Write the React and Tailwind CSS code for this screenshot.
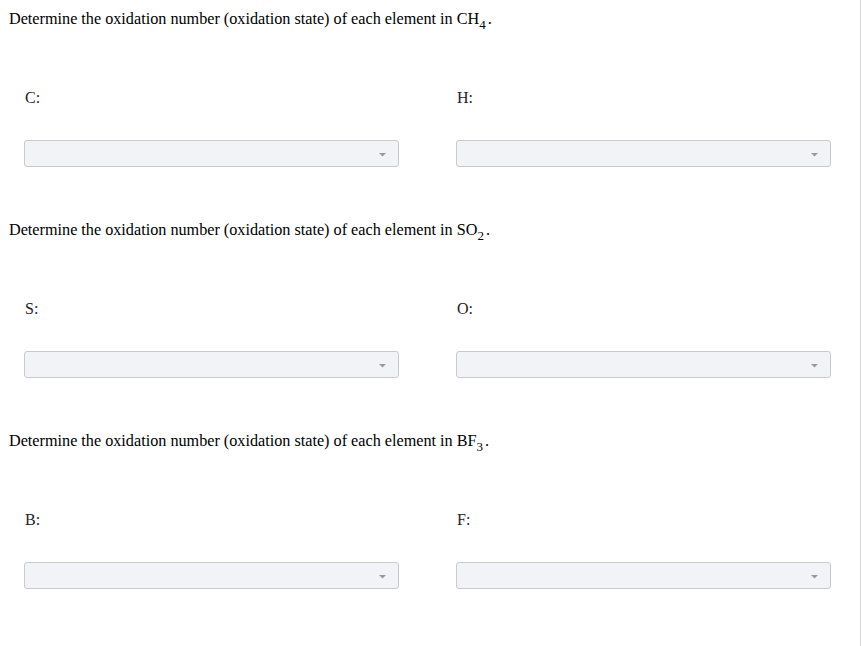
import React from "react";

const questions = [
  { formula: "CH", sub: "4", elements: ["C", "H"] },
  { formula: "SO", sub: "2", elements: ["S", "O"] },
  { formula: "BF", sub: "3", elements: ["B", "F"] },
];

const Dropdown = () => (
  <div className="h-[27px] w-full rounded-[3px] border border-[#c9cacd] bg-[#f2f3f6] flex items-center justify-end pr-[12px] pt-[3px]">
    <svg width="7" height="4" viewBox="0 0 7 4">
      <path d="M0 0 L7 0 L3.5 3.5 Z" fill="#999" />
    </svg>
  </div>
);

const Question = ({ q }) => (
  <div className="h-[211px]">
    <p className="pt-[10px] pl-[9px] text-[16.2px] leading-[19px] text-black">
      Determine the oxidation number (oxidation state) of each element in {q.formula}
      <span className="relative top-[5px] text-[13px] mr-[2px]">{q.sub}</span>.
    </p>
    <div className="mt-[59px] pl-[24px] grid grid-cols-[375px_375px] gap-x-[57px]">
      {q.elements.map((el) => (
        <div key={el}>
          <div className="pl-[1px] text-[16px] leading-[19px] text-[#222]">{el}:</div>
          <div className="mt-[33px]">
            <Dropdown />
          </div>
        </div>
      ))}
    </div>
  </div>
);

const App = () => {
  return (
    <div
      className="w-[861px] h-[646px] bg-white border-r border-[#d8d8d8]"
      style={{ fontFamily: '"Liberation Serif", serif' }}
    >
      {questions.map((q) => (
        <Question key={q.formula} q={q} />
      ))}
    </div>
  );
};

export default App;
